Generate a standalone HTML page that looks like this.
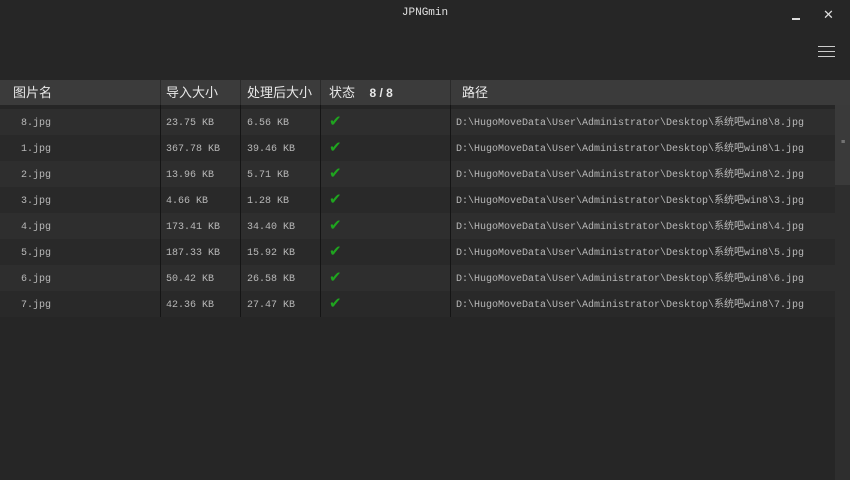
<!DOCTYPE html><html><head><meta charset="utf-8"><style>
*{margin:0;padding:0;box-sizing:border-box}
body{width:850px;height:480px;background:#262626;overflow:hidden;position:relative;font-family:"Liberation Mono","Noto Sans CJK SC",monospace;color:#b8b8b8}
.title{position:absolute;top:7px;left:0;width:850px;text-align:center;font-size:11px;color:#e0e0e0;line-height:12px}
.min{position:absolute;left:792px;top:18px;width:8px;height:2px;background:#ddd}
.x{position:absolute;left:823px;top:8px;font-size:13px;color:#ddd;font-family:"DejaVu Sans",sans-serif;font-weight:bold}
.menu{position:absolute;left:818px;top:46px;width:17px}
.menu i{display:block;height:1px;background:#ccc;margin-bottom:4px}
.hdr{position:absolute;top:80px;left:0;width:850px;height:25px;background:#3b3b3b;font-family:"Liberation Sans","Noto Sans CJK SC",sans-serif;font-size:13px;color:#e8e8e8}
.hdr span{position:absolute;top:4px;line-height:17px}
.hsep{position:absolute;top:80px;width:1px;height:25px;background:#2a2a2a}
.row{position:absolute;left:0;width:835px;height:26px;font-size:10px}
.row span{position:absolute;top:9px;line-height:12px;white-space:nowrap}
.vs{position:absolute;top:105px;width:1px;height:212px;background:#151515}
.sb{position:absolute;left:835px;top:105px;width:15px;height:375px;background:#2e2e2e}
.th{position:absolute;left:835px;top:105px;width:15px;height:80px;background:#3a3a3a}
.row .ck{color:#1fa51f;font-family:"DejaVu Sans",sans-serif;font-size:15px;top:5px;left:329px;line-height:15px}
</style></head><body>
<div class="title">JPNGmin</div>
<div class="min"></div><div class="x">✕</div>
<div class="menu"><i></i><i></i><i></i></div>
<div class="hdr"><span style="left:13px">图片名</span><span style="left:166px">导入大小</span><span style="left:247px">处理后大小</span><span style="left:329px">状态&nbsp;&nbsp;&nbsp;&nbsp;<b style="font-weight:bold;font-size:12px">8 / 8</b></span><span style="left:462px">路径</span></div>
<div class="hsep" style="left:160px"></div><div class="hsep" style="left:240px"></div><div class="hsep" style="left:320px"></div><div class="hsep" style="left:450px"></div>
<div class="row" style="top:109px;background:#2e2e2e"><span style="left:21px">8.jpg</span><span style="left:166px">23.75 KB</span><span style="left:247px">6.56 KB</span><span class="ck">✔</span><span style="left:456px">D:\HugoMoveData\User\Administrator\Desktop\系统吧win8\8.jpg</span></div>
<div class="row" style="top:135px;background:#292929"><span style="left:21px">1.jpg</span><span style="left:166px">367.78 KB</span><span style="left:247px">39.46 KB</span><span class="ck">✔</span><span style="left:456px">D:\HugoMoveData\User\Administrator\Desktop\系统吧win8\1.jpg</span></div>
<div class="row" style="top:161px;background:#2e2e2e"><span style="left:21px">2.jpg</span><span style="left:166px">13.96 KB</span><span style="left:247px">5.71 KB</span><span class="ck">✔</span><span style="left:456px">D:\HugoMoveData\User\Administrator\Desktop\系统吧win8\2.jpg</span></div>
<div class="row" style="top:187px;background:#292929"><span style="left:21px">3.jpg</span><span style="left:166px">4.66 KB</span><span style="left:247px">1.28 KB</span><span class="ck">✔</span><span style="left:456px">D:\HugoMoveData\User\Administrator\Desktop\系统吧win8\3.jpg</span></div>
<div class="row" style="top:213px;background:#2e2e2e"><span style="left:21px">4.jpg</span><span style="left:166px">173.41 KB</span><span style="left:247px">34.40 KB</span><span class="ck">✔</span><span style="left:456px">D:\HugoMoveData\User\Administrator\Desktop\系统吧win8\4.jpg</span></div>
<div class="row" style="top:239px;background:#292929"><span style="left:21px">5.jpg</span><span style="left:166px">187.33 KB</span><span style="left:247px">15.92 KB</span><span class="ck">✔</span><span style="left:456px">D:\HugoMoveData\User\Administrator\Desktop\系统吧win8\5.jpg</span></div>
<div class="row" style="top:265px;background:#2e2e2e"><span style="left:21px">6.jpg</span><span style="left:166px">50.42 KB</span><span style="left:247px">26.58 KB</span><span class="ck">✔</span><span style="left:456px">D:\HugoMoveData\User\Administrator\Desktop\系统吧win8\6.jpg</span></div>
<div class="row" style="top:291px;background:#292929"><span style="left:21px">7.jpg</span><span style="left:166px">42.36 KB</span><span style="left:247px">27.47 KB</span><span class="ck">✔</span><span style="left:456px">D:\HugoMoveData\User\Administrator\Desktop\系统吧win8\7.jpg</span></div>
<div class="vs" style="left:160px"></div><div class="vs" style="left:240px"></div><div class="vs" style="left:320px"></div><div class="vs" style="left:450px"></div>
<div class="sb"></div><div class="th"></div>
<div style="position:absolute;left:841px;top:139px;font-size:7px;color:#aaa;line-height:8px">≡</div>
</body></html>
